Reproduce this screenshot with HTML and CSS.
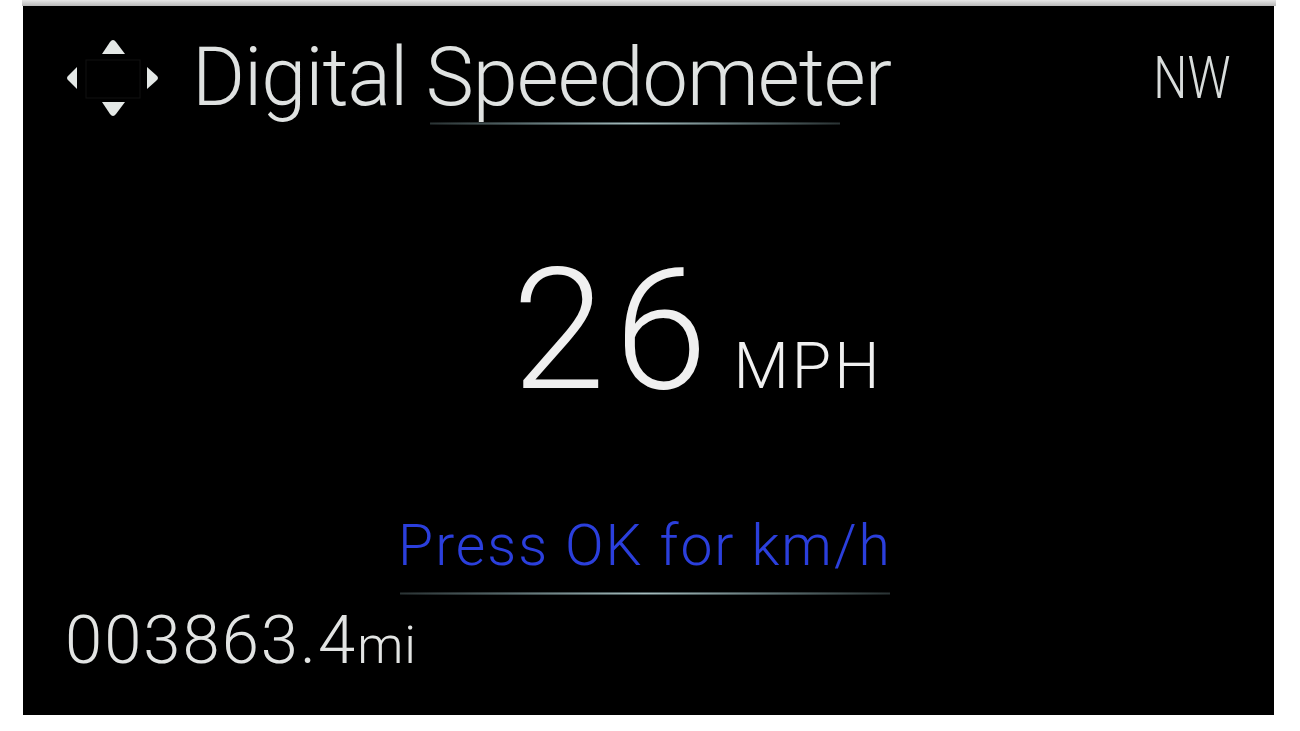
FILE: index.html
```html
<!DOCTYPE html>
<html lang="en">
<head>
  <meta charset="UTF-8" />
  <meta name="viewport" content="width=device-width, initial-scale=1.0"/>
  <title>Digital Speedometer</title>
  <link rel="stylesheet" href="styles.css">
</head>
<body>

  <div class="frame-top"></div>

  <div class="screen">
    <div class="header">
      <svg class="dpad" width="104" height="84" viewBox="60 36 104 84">
        <rect x="86" y="60" width="54" height="38" fill="none" stroke="#101010" stroke-width="1"/>
        <path d="M102 54 L110 42 Q113 38 116 42 L125 54 Z" fill="#e4e8e6"/>
        <path d="M102 102 L125 102 L116 114 Q113 118 110 114 Z" fill="#e4e8e6"/>
        <path d="M77 67 L77 89 L69 81 Q65 78 69 75 Z" fill="#e4e8e6"/>
        <path d="M147 67 L147 89 L156 81 Q160 78 156 75 Z" fill="#e4e8e6"/>
      </svg>
      <h1 class="title">Digital Speedometer</h1>
      <span class="heading">NW</span>
    </div>
    <div class="glow glow-title"></div>

    <div class="speed">
      <span class="speed-value">26</span>
      <span class="speed-unit">MPH</span>
    </div>

    <div class="hint">Press OK for km/h</div>
    <div class="glow glow-hint"></div>

    <div class="odometer">003863.4<span class="odo-unit">mi</span></div>
  </div>

</body>
</html>
```

FILE: styles.css
```css
body {
  margin: 0;
  padding: 0;
  background-color: #fff;
  font-family: 'Roboto', 'Liberation Sans', sans-serif;
  font-weight: 300;
}

.frame-top {
  height: 6px;
  margin: 0 24px 0 22px;
  background: linear-gradient(#e6e6e6, #b8b8b8);
}

.screen {
  width: 1251px;
  height: 709px;
  margin-left: 23px;
  background-color: #000;
  color: #e2e4e3;
  box-sizing: border-box;
  padding: 30px 44px 0 37px;
  display: flex;
  flex-direction: column;
}

.header {
  display: flex;
  align-items: center;
}

.dpad {
  display: block;
}

.title {
  margin: 0 0 0 28px;
  font-size: 81px;
  font-weight: 300;
  line-height: 84px;
  letter-spacing: -1px;
  color: #dfe2e1;
}

.heading {
  margin-left: auto;
  font-size: 60px;
  line-height: 60px;
  display: inline-block;
  transform: scaleX(0.8);
  transform-origin: right center;
  color: #d8dcdb;
}

.glow {
  height: 3px;
  background: radial-gradient(ellipse at center, #a9bebe 0%, #56686a 40%, rgba(40, 50, 52, 0) 100%);
}

.glow-title {
  width: 410px;
  margin: 2px 0 0 370px;
}

.speed {
  display: flex;
  align-items: baseline;
  margin: 134px 0 0 452px;
  color: #f0f0f0;
}

.speed-value {
  font-size: 168px;
  line-height: 144px;
  letter-spacing: 9px;
}

.speed-unit {
  font-size: 64px;
  margin-left: 17px;
  letter-spacing: 3px;
}

.hint {
  margin-top: 112px;
  text-align: center;
  font-size: 57px;
  line-height: 60px;
  letter-spacing: 2px;
  color: #2b3fdc;
}

.glow-hint {
  width: 490px;
  margin: 16px 0 0 340px;
}

.odometer {
  margin: 10px 0 0 5px;
  font-size: 67px;
  line-height: 70px;
  letter-spacing: 2px;
  color: #e2e4e3;
}

.odo-unit {
  font-size: 52px;
  letter-spacing: 1px;
}
```
